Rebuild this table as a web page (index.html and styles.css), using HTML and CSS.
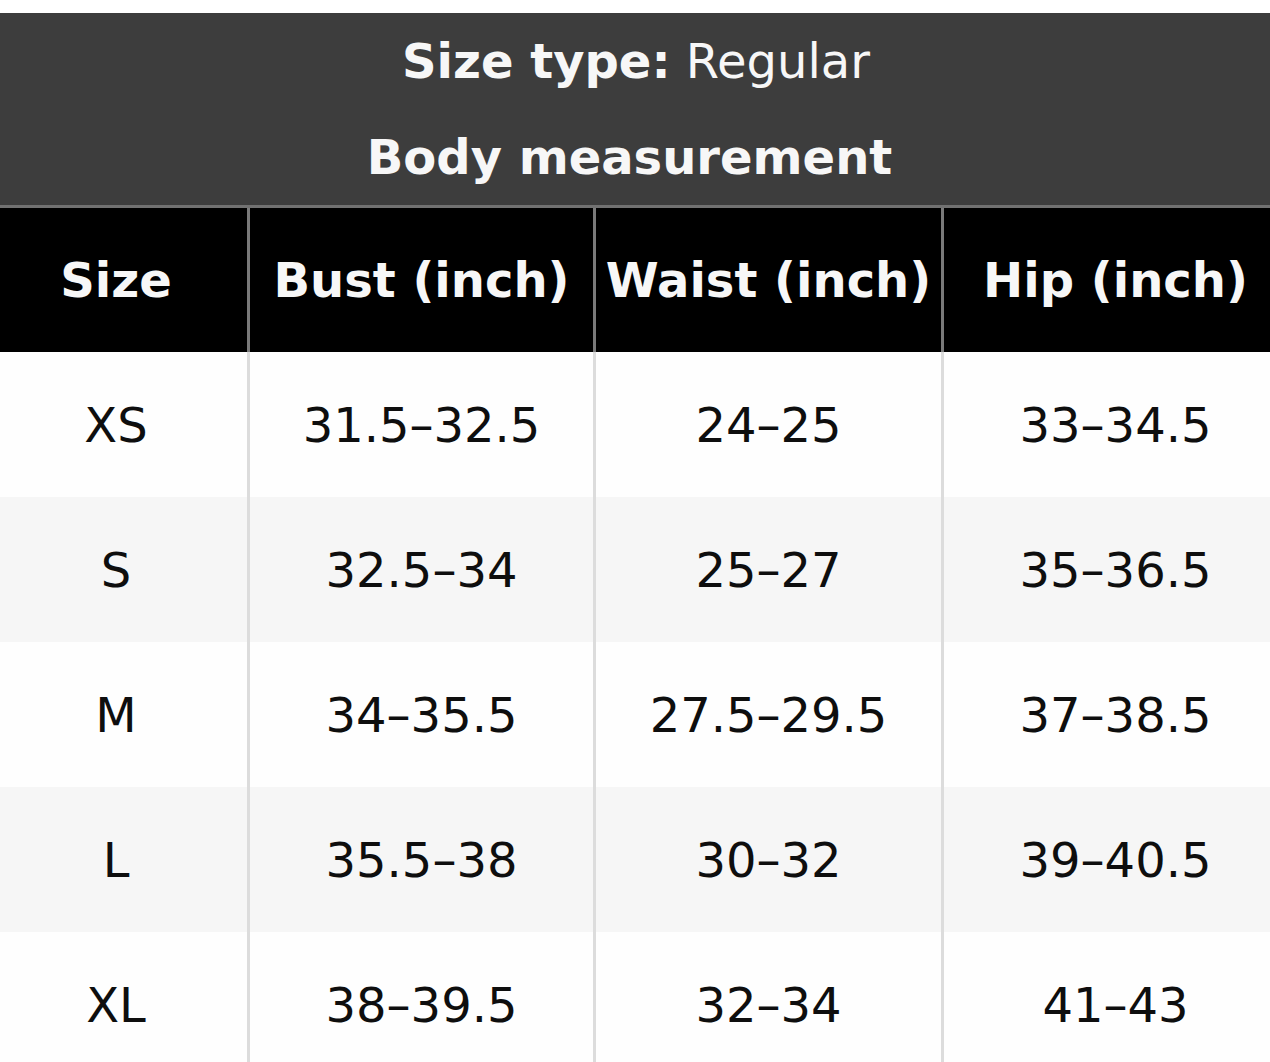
FILE: index.html
```html
<!DOCTYPE html>
<html lang="en">
<head>
<meta charset="utf-8">
<title>Size chart</title>
<link rel="stylesheet" href="styles.css">
</head>
<body>
<div class="chart">
  <div class="caption">
    <p class="line"><strong>Size type:</strong> Regular</p>
    <p class="line sub"><strong>Body measurement</strong></p>
  </div>
  <div class="grid" role="table">
    <div class="row head" role="row">
      <div class="cell" role="columnheader">Size</div>
      <div class="cell" role="columnheader">Bust (inch)</div>
      <div class="cell" role="columnheader">Waist (inch)</div>
      <div class="cell" role="columnheader">Hip (inch)</div>
    </div>
    <div class="row" role="row">
      <div class="cell">XS</div><div class="cell">31.5–32.5</div><div class="cell">24–25</div><div class="cell">33–34.5</div>
    </div>
    <div class="row alt" role="row">
      <div class="cell">S</div><div class="cell">32.5–34</div><div class="cell">25–27</div><div class="cell">35–36.5</div>
    </div>
    <div class="row" role="row">
      <div class="cell">M</div><div class="cell">34–35.5</div><div class="cell">27.5–29.5</div><div class="cell">37–38.5</div>
    </div>
    <div class="row alt" role="row">
      <div class="cell">L</div><div class="cell">35.5–38</div><div class="cell">30–32</div><div class="cell">39–40.5</div>
    </div>
    <div class="row" role="row">
      <div class="cell">XL</div><div class="cell">38–39.5</div><div class="cell">32–34</div><div class="cell">41–43</div>
    </div>
  </div>
</div>
</body>
</html>
```

FILE: styles.css
```css
html, body {
  margin: 0;
  padding: 0;
  overflow: hidden;
  background: #ffffff;
}
body {
  font-family: "DejaVu Sans", "Liberation Sans", sans-serif;
  font-size: 48px;
  color: #0e0e0e;
}
.chart {
  width: 1302px;
  margin-left: -15px;
  padding-top: 13px;
}
.caption {
  background: #3d3d3d;
  color: #f7f7f7;
  text-align: center;
  border-top-left-radius: 10px;
  border-top-right-radius: 10px;
  border-bottom: 3px solid #717171;
}
.line {
  margin: 0;
  line-height: 96px;
}
.line.sub {
  padding-right: 13px;
}
.line strong {
  font-weight: bold;
}
.row {
  display: grid;
  grid-template-columns: 262px 346px 348px 346px;
  height: 145px;
  background: #fefefe;
}
.row.alt {
  background: #f6f6f6;
}
.row.head {
  height: 144px;
  background: #000000;
  color: #f7f7f7;
  font-weight: bold;
}
.cell {
  display: flex;
  align-items: center;
  justify-content: center;
  white-space: nowrap;
  box-sizing: border-box;
}
.cell + .cell {
  border-left: 3px solid #dcdcdc;
}
.head .cell + .cell {
  border-left-color: #7a7a7a;
}
```
